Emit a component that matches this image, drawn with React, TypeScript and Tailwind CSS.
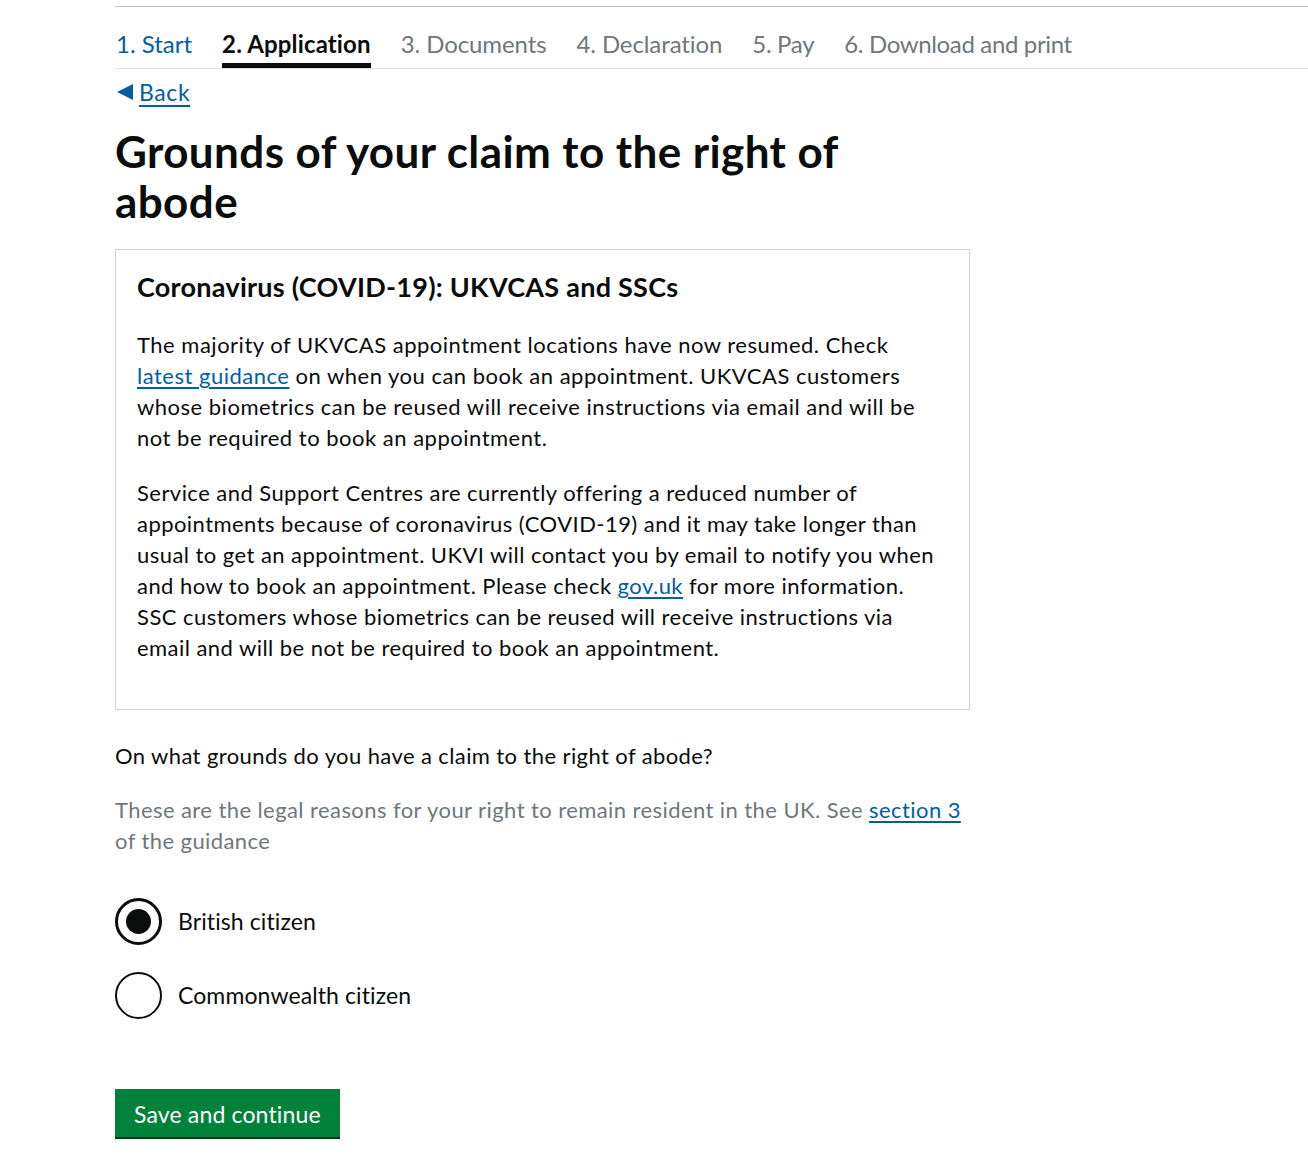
import React from "react";

const font = { fontFamily: "Lato, 'Liberation Sans', sans-serif" };

export default function App() {
  const steps = [
    { t: "1. Start", cls: "text-[#005ea5]" },
    { t: "2. Application", cls: "text-[#0b0c0c] font-bold tracking-[0.15px]", active: true },
    { t: "3. Documents", cls: "text-[#6f777b] tracking-[-0.1px]" },
    { t: "4. Declaration", cls: "text-[#6f777b] tracking-[-0.1px]" },
    { t: "5. Pay", cls: "text-[#6f777b] tracking-[-0.3px]" },
    { t: "6. Download and print", cls: "text-[#6f777b] tracking-[-0.35px]" },
  ];
  const link = "text-[#005ea5] underline underline-offset-[3px]";
  return (
    <div className="bg-white min-h-[1167px] w-[1308px] text-[#0b0c0c]" style={font}>
      <div className="pt-[6px] pl-[115px]">
        <div className="border-t border-[#bfc1c3]">
          <nav className="flex gap-[30px] pt-[20px] pl-px border-b border-[#dee0e2] h-[62px]">
            {steps.map((s) => (
              <div key={s.t} className="flex flex-col">
                <span className={`text-[24px] leading-[33px] whitespace-nowrap ${s.cls}`}>{s.t}</span>
                {s.active && <div className="h-[5px] bg-[#0b0c0c] mt-[3px]" />}
              </div>
            ))}
          </nav>
        </div>
        <div className="w-[855px]">
          <a href="#" className="flex items-center gap-[6px] mt-[9px] text-[#005ea5] text-[23px] leading-[28px] w-fit tracking-[0.6px]">
            <svg width="16" height="16" viewBox="0 0 16 16" className="ml-[2px]"><polygon points="0,8 16,0 16,16" fill="#005ea5" /></svg>
            <span className="underline underline-offset-[4px]">Back</span>
          </a>
          <h1 className="text-[44px] font-bold leading-[50px] mt-[20px] tracking-[0.4px]">
            Grounds of your claim to the right of
            <br />
            abode
          </h1>
          <div className="mt-[23px] border border-[#cfd1d3] px-[21px] pt-[19px] pb-[46px]">
            <h2 className="text-[27px] font-bold leading-[36px] tracking-[0.25px]">Coronavirus (COVID-19): UKVCAS and SSCs</h2>
            <p className="text-[22px] leading-[31px] mt-[24px] tracking-[0.5px] whitespace-nowrap">
              The majority of UKVCAS appointment locations have now resumed. Check
              <br />
              <a href="#" className={link}>latest guidance</a> on when you can book an appointment. UKVCAS customers
              <br />
              whose biometrics can be reused will receive instructions via email and will be
              <br />
              not be required to book an appointment.
            </p>
            <p className="text-[22px] leading-[31px] mt-[24px] tracking-[0.45px] whitespace-nowrap">
              Service and Support Centres are currently offering a reduced number of
              <br />
              appointments because of coronavirus (COVID-19) and it may take longer than
              <br />
              usual to get an appointment. UKVI will contact you by email to notify you when
              <br />
              and how to book an appointment. Please check <a href="#" className={link}>gov.uk</a> for more information.
              <br />
              SSC customers whose biometrics can be reused will receive instructions via
              <br />
              email and will be not be required to book an appointment.
            </p>
          </div>
          <p className="text-[22px] leading-[31px] mt-[30px] tracking-[0.4px]">On what grounds do you have a claim to the right of abode?</p>
          <p className="text-[22px] leading-[31px] mt-[23px] text-[#6f777b] tracking-[0.42px] whitespace-nowrap">
            These are the legal reasons for your right to remain resident in the UK. See{" "}
            <a href="#" className={link}>section 3</a>
            <br />
            of the guidance
          </p>
          <div className="mt-[42px] flex flex-col gap-[27px]">
            <label className="flex items-center gap-[16px]">
              <span className="w-[47px] h-[47px] rounded-full border-[3px] border-[#0b0c0c] flex items-center justify-center">
                <span className="w-[25px] h-[25px] rounded-full bg-[#0b0c0c]" />
              </span>
              <span className="text-[23px] tracking-[0.1px]">British citizen</span>
            </label>
            <label className="flex items-center gap-[16px]">
              <span className="w-[47px] h-[47px] rounded-full border-[2px] border-[#0b0c0c]" />
              <span className="text-[23px] tracking-[0.1px]">Commonwealth citizen</span>
            </label>
          </div>
          <button className="mt-[70px] bg-[#00823b] text-white text-[23px] leading-[28px] px-[19px] pt-[11px] pb-[9px] shadow-[0_2px_0_#003618] tracking-[0.15px]">
            Save and continue
          </button>
        </div>
      </div>
    </div>
  );
}
